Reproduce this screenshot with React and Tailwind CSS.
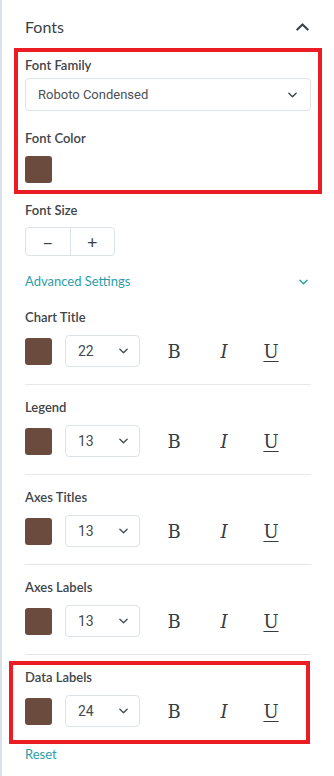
import React from "react";

const Chevron = ({ className = "", up = false }) => (
  <svg viewBox="0 0 10 6" className={className} fill="none" stroke="currentColor" strokeWidth="1.6" strokeLinecap="round" strokeLinejoin="round">
    {up ? <path d="M1 5 L5 1 L9 5" /> : <path d="M1 1 L5 5 L9 1" />}
  </svg>
);

const Label = ({ children }) => (
  <div className="h-[18px] leading-[18px] text-[13px] font-semibold text-[#3e454a]">{children}</div>
);

const Swatch = () => <div className="w-[27px] h-[27px] rounded-[3px] bg-[#6b4b3e] shrink-0" />;

const FontRow = ({ label, size, first = false }) => (
  <div>
    {!first && <div className="h-px bg-[#e3e7ea]" />}
    <div className={first ? "mt-[17px]" : "mt-[13px]"}>
      <Label>{label}</Label>
    </div>
    <div className="mt-[9px] flex items-center h-[32px]">
      <Swatch />
      <div className="ml-[13px] w-[75px] h-[32px] border border-[#dde2e6] rounded-[4px] flex items-center justify-between pl-[12px] pr-[11px] text-[14px] text-[#444a4f] font-['Roboto']">
        <span>{size}</span>
        <Chevron className="w-[9px] h-[6px] text-[#4a5157]" />
      </div>
      <div className="ml-[14px] w-[40px] text-center font-['DejaVu_Serif'] text-[18px] text-[#353c42]">B</div>
      <div className="ml-[10px] w-[40px] text-center font-['DejaVu_Serif'] italic text-[18px] text-[#353c42]">I</div>
      <div className="ml-[7px] w-[40px] text-center font-['DejaVu_Serif'] underline underline-offset-[3px] text-[18px] text-[#353c42]">U</div>
    </div>
    <div className="h-[17px]" />
  </div>
);

export default function App() {
  return (
    <div className="relative w-[334px] h-[776px] bg-white border-l-2 border-[#dbe2e7] overflow-hidden font-['Lato',sans-serif]">
      <div className="px-[23px]">
        <div className="h-[54px] flex items-center justify-between">
          <span className="text-[16px] text-[#3a4146]">Fonts</span>
          <Chevron up className="w-[13px] h-[8px] mr-[2px] text-[#3a4146]" />
        </div>
        <div className="mt-[2px]">
          <Label>Font Family</Label>
        </div>
        <div className="mt-[4px] h-[33px] border border-[#dde2e6] rounded-[4px] flex items-center justify-between pl-[12px] pr-[13px] text-[13px] text-[#4b5156] font-['Roboto']">
          <span>Roboto Condensed</span>
          <Chevron className="w-[9px] h-[6px] text-[#3f464c]" />
        </div>
        <div className="mt-[18px]">
          <Label>Font Color</Label>
        </div>
        <div className="mt-[9px]">
          <Swatch />
        </div>
        <div className="mt-[18px]">
          <Label>Font Size</Label>
        </div>
        <div className="mt-[8px] flex w-[90px] h-[29px] border border-[#dde2e6] rounded-[4px] text-[#3a4146]">
          <div className="flex-1 flex items-center justify-center border-r border-[#dde2e6] text-[18px] leading-none">−</div>
          <div className="flex-1 flex items-center justify-center text-[18px] leading-none">+</div>
        </div>
        <div className="mt-[17px] h-[18px] flex items-center justify-between text-[13px] text-[#2b9ea7]">
          <span>Advanced Settings</span>
          <Chevron className="w-[9px] h-[6px] mr-[3px]" />
        </div>
        <FontRow first label="Chart Title" size="22" />
        <FontRow label="Legend" size="13" />
        <FontRow label="Axes Titles" size="13" />
        <FontRow label="Axes Labels" size="13" />
        <FontRow label="Data Labels" size="24" />
        <div className="mt-[1px] h-[18px] leading-[18px] text-[13px] text-[#2b9ea7]">Reset</div>
      </div>
      <div className="absolute left-[12px] top-[48px] w-[308px] h-[146px] border-[4px] border-[#ec1c24] pointer-events-none" />
      <div className="absolute left-[7px] top-[661px] w-[301px] h-[83px] border-[4px] border-[#ec1c24] pointer-events-none" />
    </div>
  );
}
